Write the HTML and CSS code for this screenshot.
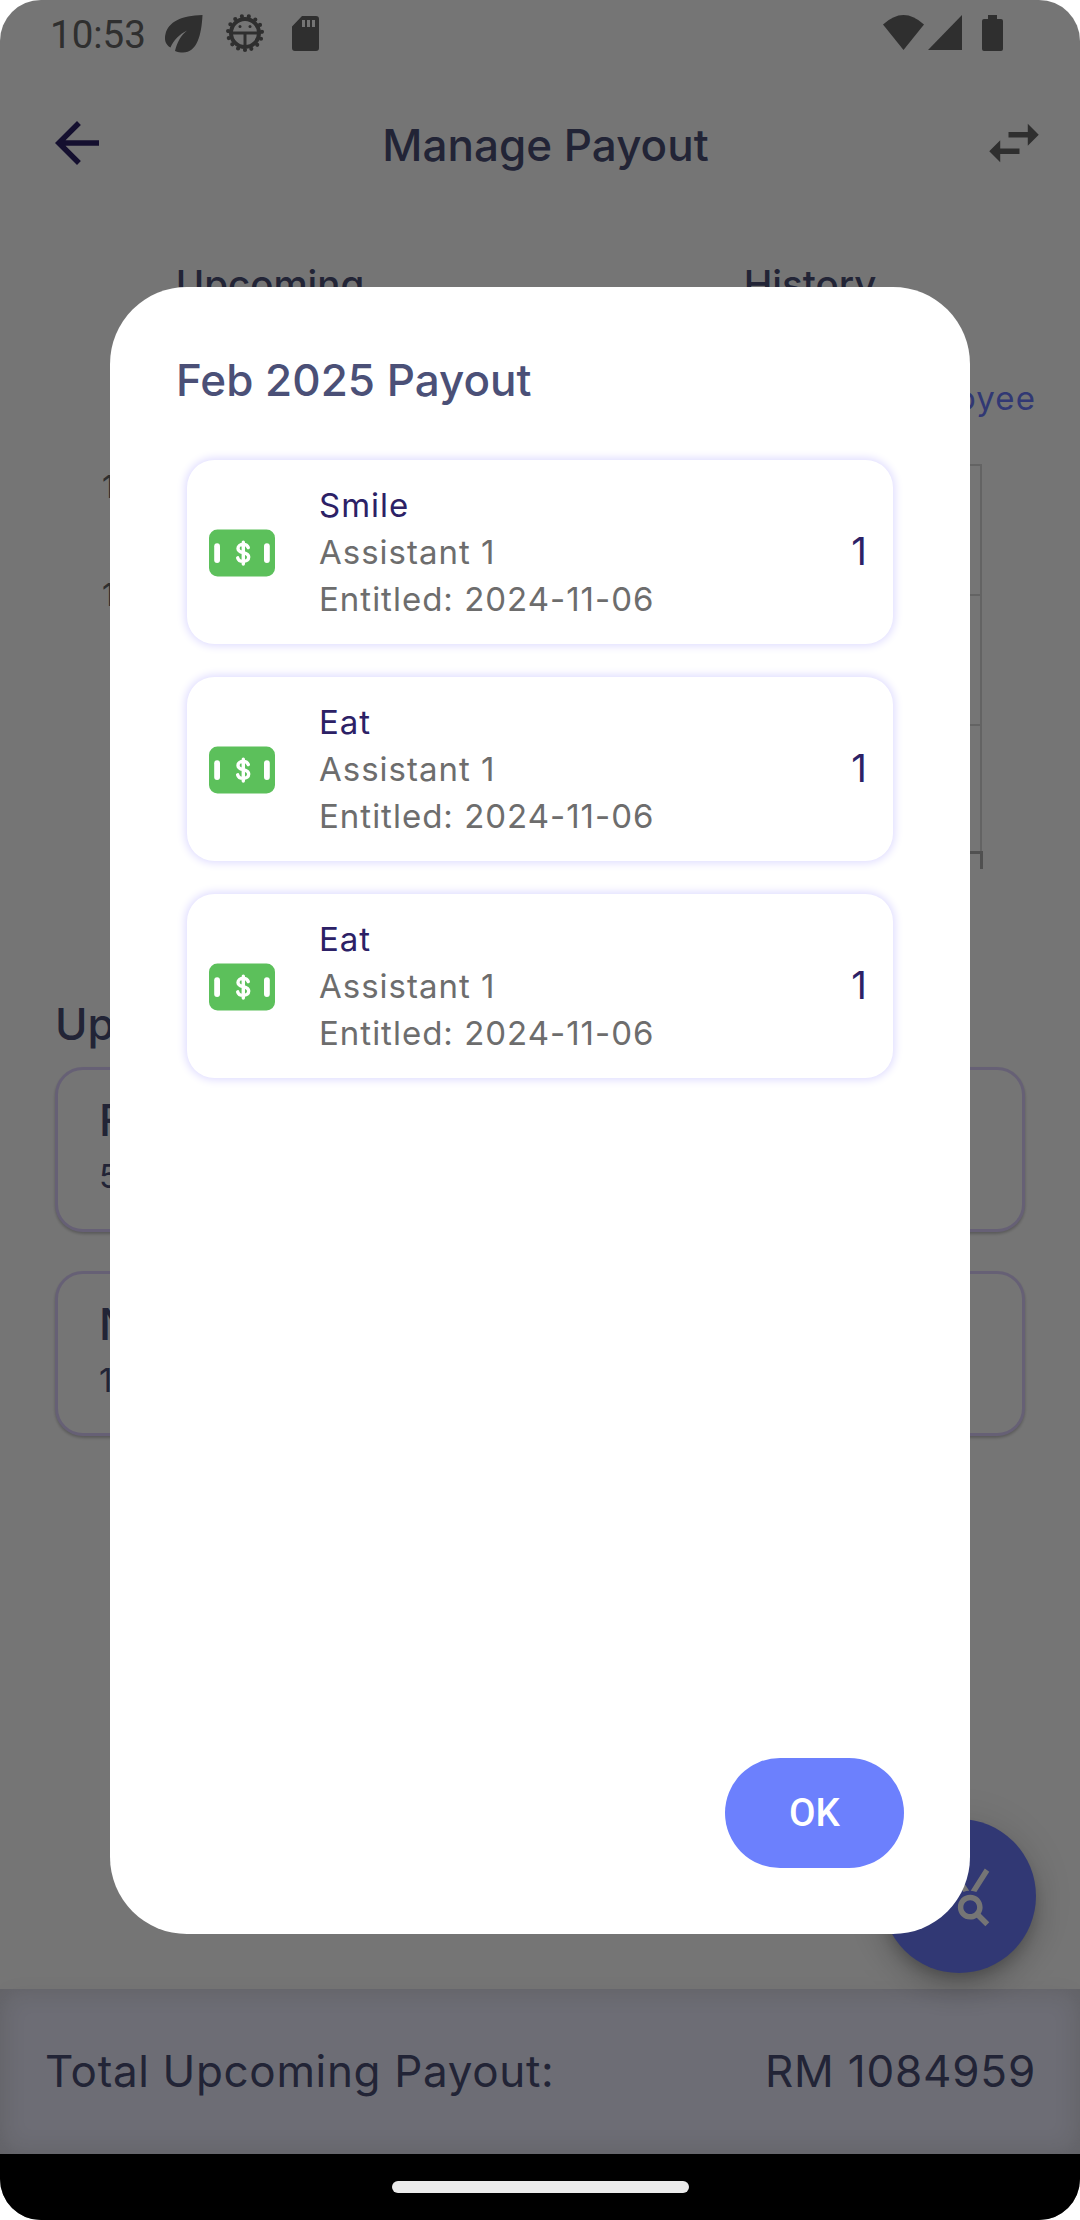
FILE: index.html
```html
<!DOCTYPE html>
<html lang="en">
<head>
<meta charset="utf-8">
<title>Manage Payout</title>
<link rel="stylesheet" href="styles.css">
</head>
<body>
<svg class="defs" aria-hidden="true">
  <symbol id="cash" viewBox="0 0 66 66">
    <rect y="9.5" width="66" height="47" rx="8.5" fill="#5cc05b"/>
    <rect x="5.2" y="23.3" width="5.8" height="19.6" rx="2.9" fill="#fff"/>
    <rect x="55" y="23.3" width="5.8" height="19.6" rx="2.9" fill="#fff"/>
    <path d="M39.3 27.6C38.6 25.6 36.7 24.4 34.2 24.4C31.2 24.4 29 26 29 28.5C29 34.5 39.7 30.8 39.7 37.1C39.7 39.8 37.4 41.4 34.3 41.4C31.3 41.4 29.2 40 28.7 37.8M34.3 22.2V44" fill="none" stroke="#fff" stroke-width="3.4" stroke-linecap="round"/>
  </symbol>
</svg>
<div class="screen">
  <div class="app">
    <header class="status">
      <span class="clock">10:53</span>
      <svg class="leaf" viewBox="0 0 40 40"><path d="M38.5 1C37.5 21 33 38.5 19 38.5C16.5 38.5 13.5 38 11 37C13 28 17 21.5 23 16.500C16 20 9.500 26 6.500 33.500C1.500 31 0 25.500 1.500 20C4.500 8 17 1.500 38.500 1Z"/></svg>
      <svg class="bug" viewBox="0 0 40 40">
        <circle cx="20" cy="20" r="14" fill="none" stroke="#666" stroke-width="4"/>
        <circle cx="20" cy="20" r="17" fill="none" stroke="#666" stroke-width="4.2" stroke-linecap="round" stroke-dasharray="0 7.121" transform="rotate(90 20 20)"/>
        <path d="M7 18.500H33V21.500H21.500V33H18.500V21.500H7Z"/><circle cx="15" cy="13.500" r="1.500"/><circle cx="25" cy="13.500" r="1.500"/>
      </svg>
      <svg class="sd" viewBox="0 0 27 35"><path fill-rule="evenodd" d="M10 0H24Q27 0 27 3V32Q27 35 24 35H3Q0 35 0 32V10.500ZM10 4V11H13V4ZM15 4V11H18V4ZM20 4V11H23V4Z"/></svg>
      <svg class="wifi" viewBox="0 0 41 35"><path d="M0 9.500Q20.500 -9.500 41 9.500L20.500 35Z"/></svg>
      <svg class="signal" viewBox="0 0 34 35"><path d="M34 0V35H0Z"/></svg>
      <svg class="battery" viewBox="0 0 21 36"><path d="M6 0H15V4H19Q21 4 21 6V34Q21 36 19 36H2Q0 36 0 34V6Q0 4 2 4H6Z"/></svg>
    </header>
    <div class="appbar">
      <svg class="icon back" viewBox="0 0 24 24"><path d="M20 11H7.830l5.590-5.590L12 4l-8 8 8 8 1.410-1.410L7.830 13H20v-2z"/></svg>
      <h1>Manage Payout</h1>
      <svg class="icon swap" viewBox="0 0 24 24"><path d="M6.990 11L3 15l3.990 4v-3H14v-2H6.990v-3zM21 9l-3.990-4v3H10v2h7.010v3L21 9z"/></svg>
    </div>
    <nav class="tabs"><span>Upcoming</span><span>History</span></nav>
    <div class="filter">Employee</div>
    <section class="chart">
      <div class="scale"><span>1</span><span>1</span></div>
      <div class="plot"><i></i><i></i><i></i></div>
    </section>
    <h2>Upcoming</h2>
    <div class="months">
      <article class="month"><h3>Feb 2025</h3><p>5</p></article>
      <article class="month"><h3>Nov 2025</h3><p>1</p></article>
    </div>
    <div class="fab"><svg class="icon" viewBox="0 0 24 24"><path d="M19.880 18.470c.44-.7.7-1.510.7-2.390 0-2.490-2.010-4.500-4.500-4.500s-4.500 2.010-4.500 4.500 2.010 4.500 4.490 4.500c.88 0 1.700-.26 2.390-.7L21.580 23 23 21.580l-3.120-3.110zm-3.800.11c-1.380 0-2.500-1.120-2.500-2.500s1.120-2.500 2.500-2.500 2.500 1.120 2.500 2.500-1.120 2.500-2.500 2.500zm-.36-8.500c-.74.02-1.450.18-2.100.45l-.55-.83-3.800 6.180-3.010-3.520-3.630 5.810L1 17l5-8 3 3.500L13 6l2.720 4.080zm2.590.5c-.64-.28-1.330-.45-2.050-.49L21.380 2 23 3.180l-4.690 7.400z"/></svg></div>
    <footer class="total"><span class="label">Total Upcoming Payout:</span><span>RM 1084959</span></footer>
  </div>
  <div class="navbar"><div class="pill"></div></div>
  <div class="scrim">
    <div class="dialog">
      <h2 class="dialog-title">Feb 2025 Payout</h2>
      <div class="list">
        <div class="entry"><svg><use href="#cash"/></svg><div class="info"><b>Smile</b><span>Assistant 1</span><span>Entitled: 2024-11-06</span></div><span class="count">1</span></div>
        <div class="entry"><svg><use href="#cash"/></svg><div class="info"><b>Eat</b><span>Assistant 1</span><span>Entitled: 2024-11-06</span></div><span class="count">1</span></div>
        <div class="entry"><svg><use href="#cash"/></svg><div class="info"><b>Eat</b><span>Assistant 1</span><span>Entitled: 2024-11-06</span></div><span class="count">1</span></div>
      </div>
      <button class="ok">OK</button>
    </div>
  </div>
</div>
</body>
</html>
```
FILE: styles.css
```css
* { box-sizing: border-box; }
body { margin: 0; background: #fff; font-family: Inter, "Noto Sans", sans-serif; color: #4b5077; }
h1, h2, h3, p { margin: 0; font-weight: 500; }
svg { display: block; flex: none; }
.defs { position: absolute; width: 0; height: 0; }
.icon { width: 66px; height: 66px; }

.screen { position: relative; width: 1080px; height: 2220px; border-radius: 41px; overflow: hidden; display: flex; flex-direction: column; }
.app { position: relative; height: 2154px; background: #fff; display: flex; flex-direction: column; }

.status { height: 66px; flex: none; display: flex; align-items: flex-start; padding: 0 77px 0 50px; font-family: Roboto, sans-serif; font-size: 38.5px; color: #666; fill: #666; }
.clock { line-height: 45px; margin-top: 12px; width: 113.5px; }
.leaf { width: 40px; height: 40px; margin-top: 13.5px; }
.bug { width: 40px; height: 40px; margin: 13px 0 0 21px; }
.sd { width: 27px; height: 35px; margin: 15.5px auto 0 27.5px; }
.wifi { width: 41px; height: 35px; margin-top: 15px; }
.signal { width: 34px; height: 35px; margin: 15px 20px 0 4px; }
.battery { width: 21px; height: 36px; margin-top: 15px; }

.appbar { height: 154px; flex: none; display: flex; align-items: center; justify-content: space-between; padding: 0 33px 0 44px; }
.appbar h1 { font-size: 44px; line-height: 66px; letter-spacing: 0; margin-top: 3px; }
.back { fill: #2c2166; }
.swap { fill: #666; }

.tabs { height: 132px; flex: none; display: flex; padding-top: 41px; font-size: 38.5px; font-weight: 500; line-height: 46px; }
.tabs span { flex: 1; text-align: center; }
.filter { height: 112px; flex: none; padding: 26px 44px 0 0; text-align: right; font-size: 33px; line-height: 40px; letter-spacing: 1.1px; color: #6b7bfc; }
.chart { display: flex; height: 406px; flex: none; padding: 0 98px 0 102px; }
.scale { width: 78px; color: #666; font-size: 31px; line-height: 38px; display: flex; flex-direction: column; gap: 69.500px; padding-top: 4px; }
.plot { flex: 1; border-right: 2px solid #d8d8d8; height: 391px; position: relative; }
.plot i { display: block; height: 130px; border-top: 2px solid #d8d8d8; }
.plot::after { content: ""; position: absolute; right: -3px; bottom: -14px; width: 100%; height: 15px; border: solid #aeaeae; border-width: 3px 3px 0 0; }
.app h2 { margin: 127px 0 0 55px; font-size: 44px; line-height: 54px; height: 70px; flex: none; }
.months { display: flex; flex-direction: column; gap: 39px; padding: 0 55px; }
.month { height: 165px; border: 3px solid #dfd2ff; border-radius: 28px; background: #fff; box-shadow: 0 2px 3px rgba(0,0,0,.24); padding: 23px 41px; }
.month h3 { font-size: 44px; line-height: 54px; }
.month p { font-size: 33px; line-height: 40px; font-weight: 400; margin-top: 9px; }

.total { margin-top: auto; height: 165px; display: flex; align-items: center; justify-content: space-between; padding: 0 44px 2px 45px; font-size: 44px; letter-spacing: .8px; background: #eeeeff; box-shadow: 0 0 28px rgba(0,0,0,.04), inset 0 0 28px rgba(80,80,50,.2); }
.label { letter-spacing: .65px; }
.fab { position: absolute; left: 882px; top: 1818.500px; width: 154px; height: 154px; border-radius: 50%; background: #6b7bfc; display: grid; place-items: center; z-index: 1; box-shadow: 0 8px 14px -3px rgba(0,0,0,.2), 0 16px 28px rgba(0,0,0,.14), 0 3px 50px rgba(0,0,0,.12); }
.fab svg { fill: #fff; }

.navbar { position: relative; z-index: 3; height: 66px; background: #000; display: flex; justify-content: center; padding-top: 27px; }
.pill { width: 297px; height: 12px; border-radius: 6px; background: #ebebeb; }

.scrim { position: absolute; inset: 0; z-index: 2; background: rgba(0,0,0,.54); display: flex; flex-direction: column; padding: 286.500px 110px; }
.dialog { height: 1647px; flex: none; border-radius: 77px; background: #fff; padding: 66px; display: flex; flex-direction: column; }
.dialog-title { font-size: 44px; line-height: 54px; }
.list { padding: 53px 11px 0; display: flex; flex-direction: column; gap: 32.700px; }
.entry { height: 184.500px; border-radius: 27.500px; background: #fff; box-shadow: 0 0 8px 2px #dfdcff; display: flex; align-items: center; padding: 0 26px 0 22px; }
.entry svg { width: 66px; height: 66px; margin-top: 1.5px; }
.info { margin: 1.5px 0 0 44px; flex: 1; display: flex; flex-direction: column; font-size: 33px; line-height: 47px; letter-spacing: 1px; color: #6d6d6d; }
.info b { font-weight: 400; color: #2c2166; }
.count { font-size: 38.500px; color: #2c2166; margin-top: -1.5px; }
.ok { margin: auto 0 0 auto; width: 179px; height: 110px; border: 0; border-radius: 55px; background: #6c80fd; color: #fff; font: 500 38.500px Roboto, sans-serif; padding: 0; }
```
